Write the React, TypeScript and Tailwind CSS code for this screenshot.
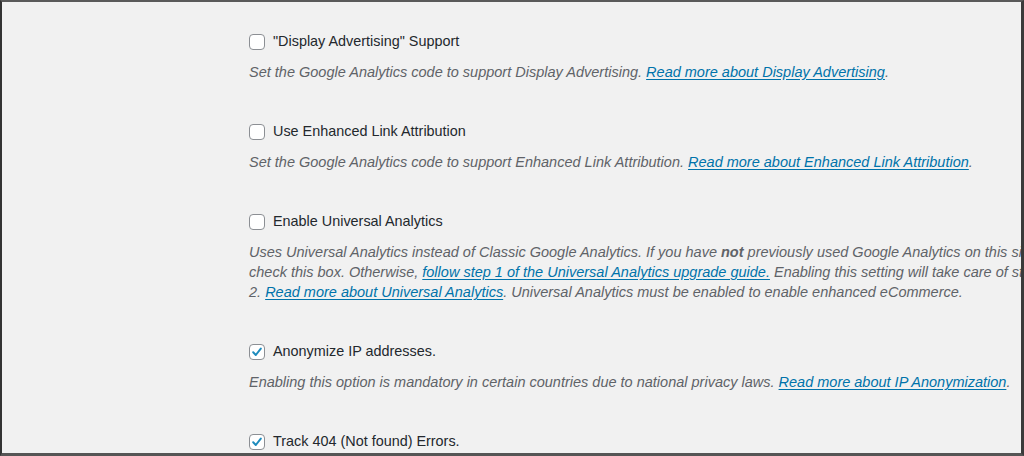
import { FC, ReactNode } from "react";

const Check: FC<{ checked?: boolean }> = ({ checked }) => (
  <span className="flex h-4 w-4 shrink-0 items-center justify-center rounded-[4px] border border-[#8c8f94] bg-white">
    {checked && (
      <svg width="12" height="12" viewBox="0 0 12 12">
        <path
          d="M2.2 6.3 L4.8 9 L9.8 2.6"
          fill="none"
          stroke="#1e8cbe"
          strokeWidth="2"
          strokeLinecap="round"
          strokeLinejoin="round"
        />
      </svg>
    )}
  </span>
);

const A: FC<{ children: ReactNode }> = ({ children }) => (
  <a href="#" className="text-[#0073aa] underline underline-offset-2">
    {children}
  </a>
);

const Option: FC<{
  label: string;
  checked?: boolean;
  children: ReactNode;
  last?: boolean;
}> = ({ label, checked, children, last }) => (
  <div className={last ? "" : "mb-10"}>
    <label className="flex h-5 items-center gap-2 text-[14.4px] text-[#23282d]">
      <Check checked={checked} />
      <span>{label}</span>
    </label>
    {children && (
      <p className="mt-[10px] whitespace-nowrap text-[14.5px] italic leading-5 text-[#5f6368]">
        {children}
      </p>
    )}
  </div>
);

export default function App() {
  return (
    <div
      className="h-[456px] w-[1024px] overflow-hidden border-t-2 border-r-[3px] border-b-[3px] border-l-2 border-t-[#5a5a5a] border-r-[#3a3a3a] border-b-[#555] border-l-[#333] bg-[#f1f1f1]"
      style={{ fontFamily: '"Liberation Sans", Arial, sans-serif' }}
    >
      <div className="pl-[247px] pt-[30px]">
        <Option label={'"Display Advertising" Support'}>
          Set the Google Analytics code to support Display Advertising.{" "}
          <A>Read more about Display Advertising</A>.
        </Option>
        <Option label="Use Enhanced Link Attribution">
          Set the Google Analytics code to support Enhanced Link Attribution.{" "}
          <A>Read more about Enhanced Link Attribution</A>.
        </Option>
        <Option label="Enable Universal Analytics">
          Uses Universal Analytics instead of Classic Google Analytics. If you
          have <b className="font-bold">not</b> previously used Google Analytics
          on this site,
          <br />
          check this box. Otherwise,{" "}
          <A>follow step 1 of the Universal Analytics upgrade guide.</A>{" "}
          Enabling this setting will take care of step
          <br />
          2. <A>Read more about Universal Analytics</A>. Universal Analytics
          must be enabled to enable enhanced eCommerce.
        </Option>
        <Option label="Anonymize IP addresses." checked>
          Enabling this option is mandatory in certain countries due to
          national privacy laws. <A>Read more about IP Anonymization</A>.
        </Option>
        <Option label="Track 404 (Not found) Errors." checked last>
          {null}
        </Option>
      </div>
    </div>
  );
}
